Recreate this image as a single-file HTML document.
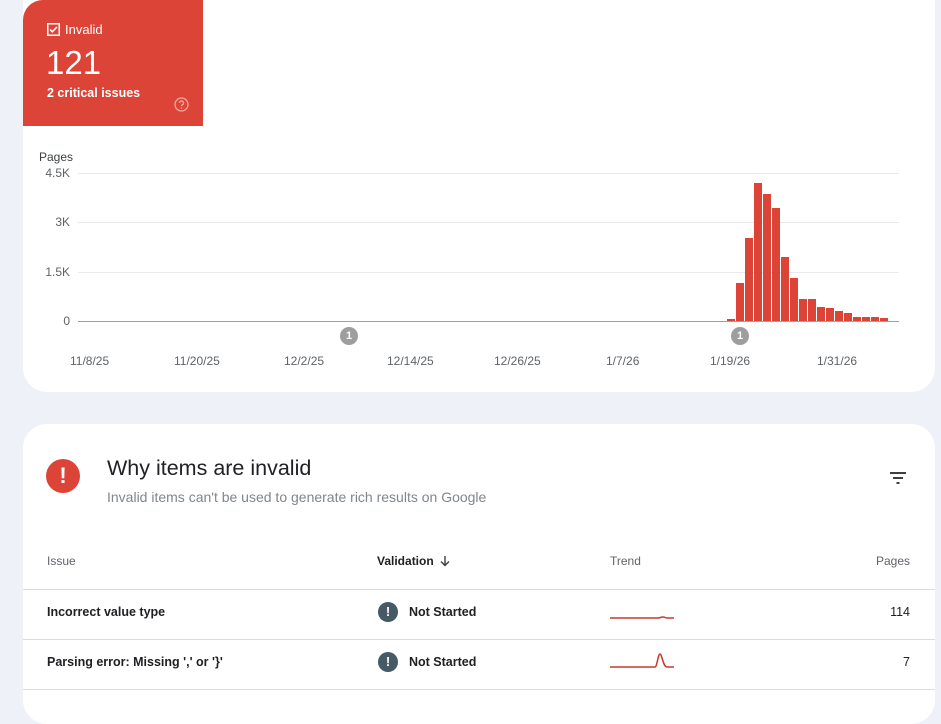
<!DOCTYPE html>
<html><head><meta charset="utf-8"><style>
*{margin:0;padding:0;box-sizing:border-box}
body{width:941px;height:692px;background:#eef2f8;font-family:"Liberation Sans",Arial,sans-serif;position:relative;overflow:hidden;color:#202124}
.card{position:absolute;background:#fff;left:23px;width:912px}
.a{position:absolute;white-space:nowrap}
.yl{font-size:12px;color:#5f6368;right:871px;text-align:right}
.dl{font-size:12px;color:#5f6368;top:354px}
.g{position:absolute;left:78px;width:821px;height:1px;background:#e8eaed}
.bar{position:absolute;width:8px;background:#db4437;bottom:371px}
.hl{position:absolute;left:23px;width:912px;height:1px;background:#dadce0}
.ann{position:absolute;width:18px;height:18px;border-radius:50%;background:#9e9e9e;color:#fff;font-size:11px;font-weight:bold;text-align:center;line-height:18px}
.th{font-size:12px;color:#5f6368;top:554px}
.td{font-size:12.5px;font-weight:bold}
.ex{position:absolute;width:20px;height:20px;border-radius:50%;background:#455a64;color:#fff;font-weight:bold;font-size:13px;text-align:center;line-height:20px}
</style></head><body>
<div class="card" style="top:-30px;height:422px;border-radius:24px"></div>
<div class="a" style="left:23px;top:0;width:180px;height:126px;background:#db4437;border-top-left-radius:20px"></div>
<svg class="a" style="left:47px;top:23px" width="13" height="13" viewBox="0 0 13 13"><rect x="0.75" y="0.75" width="11.5" height="11.5" fill="none" stroke="#fff" stroke-width="1.5"/><path d="M3 6.5l2.3 2.3L10 4" fill="none" stroke="#fff" stroke-width="1.6"/></svg>
<div class="a" style="left:65px;top:22px;color:#fff;font-size:13px">Invalid</div>
<div class="a" style="left:46px;top:44px;color:#fff;font-size:33px">121</div>
<div class="a" style="left:47px;top:86px;color:#fff;font-size:12.5px;font-weight:bold">2 critical issues</div>
<svg class="a" style="left:174px;top:97px" width="15" height="15" viewBox="0 0 15 15"><circle cx="7.5" cy="7.5" r="6.5" fill="none" stroke="#f2a9a2" stroke-width="1.3"/><path d="M5.5 6a2 2 0 1 1 2.8 1.8c-.6.3-.8.7-.8 1.3" fill="none" stroke="#f2a9a2" stroke-width="1.3"/><circle cx="7.5" cy="11" r=".8" fill="#f2a9a2"/></svg>
<div class="a" style="left:39px;top:150px;font-size:12px;color:#3c4043">Pages</div>
<div class="a yl" style="top:166px">4.5K</div>
<div class="a yl" style="top:215px">3K</div>
<div class="a yl" style="top:265px">1.5K</div>
<div class="a yl" style="top:314px">0</div>
<div class="g" style="top:173px"></div><div class="g" style="top:222px"></div><div class="g" style="top:272px"></div>
<div class="g" style="top:321px;background:#9aa0a6"></div>
<div class="bar" style="left:727px;height:2px"></div>
<div class="bar" style="left:736px;height:38px"></div>
<div class="bar" style="left:745px;height:83px"></div>
<div class="bar" style="left:754px;height:138px"></div>
<div class="bar" style="left:763px;height:127px"></div>
<div class="bar" style="left:772px;height:113px"></div>
<div class="bar" style="left:781px;height:64px"></div>
<div class="bar" style="left:790px;height:43px"></div>
<div class="bar" style="left:799px;height:22px"></div>
<div class="bar" style="left:808px;height:22px"></div>
<div class="bar" style="left:817px;height:14px"></div>
<div class="bar" style="left:826px;height:13px"></div>
<div class="bar" style="left:835px;height:10px"></div>
<div class="bar" style="left:844px;height:8px"></div>
<div class="bar" style="left:853px;height:4px"></div>
<div class="bar" style="left:862px;height:4px"></div>
<div class="bar" style="left:871px;height:4px"></div>
<div class="bar" style="left:880px;height:3px"></div>
<div class="ann" style="left:340px;top:327px">1</div>
<div class="ann" style="left:731px;top:327px">1</div>
<div class="a dl" style="left:70px">11/8/25</div>
<div class="a dl" style="left:174px">11/20/25</div>
<div class="a dl" style="left:284px">12/2/25</div>
<div class="a dl" style="left:387px">12/14/25</div>
<div class="a dl" style="left:494px">12/26/25</div>
<div class="a dl" style="left:606px">1/7/26</div>
<div class="a dl" style="left:710px">1/19/26</div>
<div class="a dl" style="left:817px">1/31/26</div>

<div class="card" style="top:424px;height:300px;border-radius:24px"></div>
<div class="a" style="left:46px;top:459px;width:34px;height:34px;border-radius:50%;background:#db4437;color:#fff;font-weight:bold;font-size:22px;text-align:center;line-height:34px">!</div>
<div class="a" style="left:107px;top:456px;font-size:21.5px;color:#202124">Why items are invalid</div>
<div class="a" style="left:107px;top:489px;font-size:14px;color:#80868b">Invalid items can't be used to generate rich results on Google</div>
<svg class="a" style="left:889px;top:471px" width="18" height="14" viewBox="0 0 18 14"><path d="M1 2h16M4 7h10M7.5 12h3" stroke="#3c4043" stroke-width="2"/></svg>
<div class="a th" style="left:47px">Issue</div>
<div class="a th" style="left:377px;color:#202124;font-weight:bold">Validation</div>
<svg class="a" style="left:439px;top:555px" width="12" height="12" viewBox="0 0 12 12"><path d="M6 1v9M2 6.5l4 4 4-4" fill="none" stroke="#3c4043" stroke-width="1.4"/></svg>
<div class="a th" style="left:610px">Trend</div>
<div class="a th" style="right:31px">Pages</div>
<div class="hl" style="top:589px"></div>
<div class="a td" style="left:47px;top:605px">Incorrect value type</div>
<div class="ex" style="left:378px;top:602px">!</div>
<div class="a td" style="left:409px;top:605px">Not Started</div>
<svg class="a" style="left:610px;top:605px" width="64" height="16"><path d="M0 13H48c2 0 3-1 5-1s2 1 4 1H64" fill="none" stroke="#c5392b" stroke-width="1.5"/></svg>
<div class="a" style="right:31px;top:605px;font-size:12.5px">114</div>
<div class="hl" style="top:639px"></div>
<div class="a td" style="left:47px;top:655px">Parsing error: Missing ',' or '}'</div>
<div class="ex" style="left:378px;top:652px">!</div>
<div class="a td" style="left:409px;top:655px">Not Started</div>
<svg class="a" style="left:610px;top:650px" width="64" height="20"><path d="M0 17H45c2 0 3-13 5-13s3 13 7 13H64" fill="none" stroke="#c5392b" stroke-width="1.5"/></svg>
<div class="a" style="right:31px;top:655px;font-size:12.5px">7</div>
<div class="hl" style="top:689px"></div>
</body></html>
